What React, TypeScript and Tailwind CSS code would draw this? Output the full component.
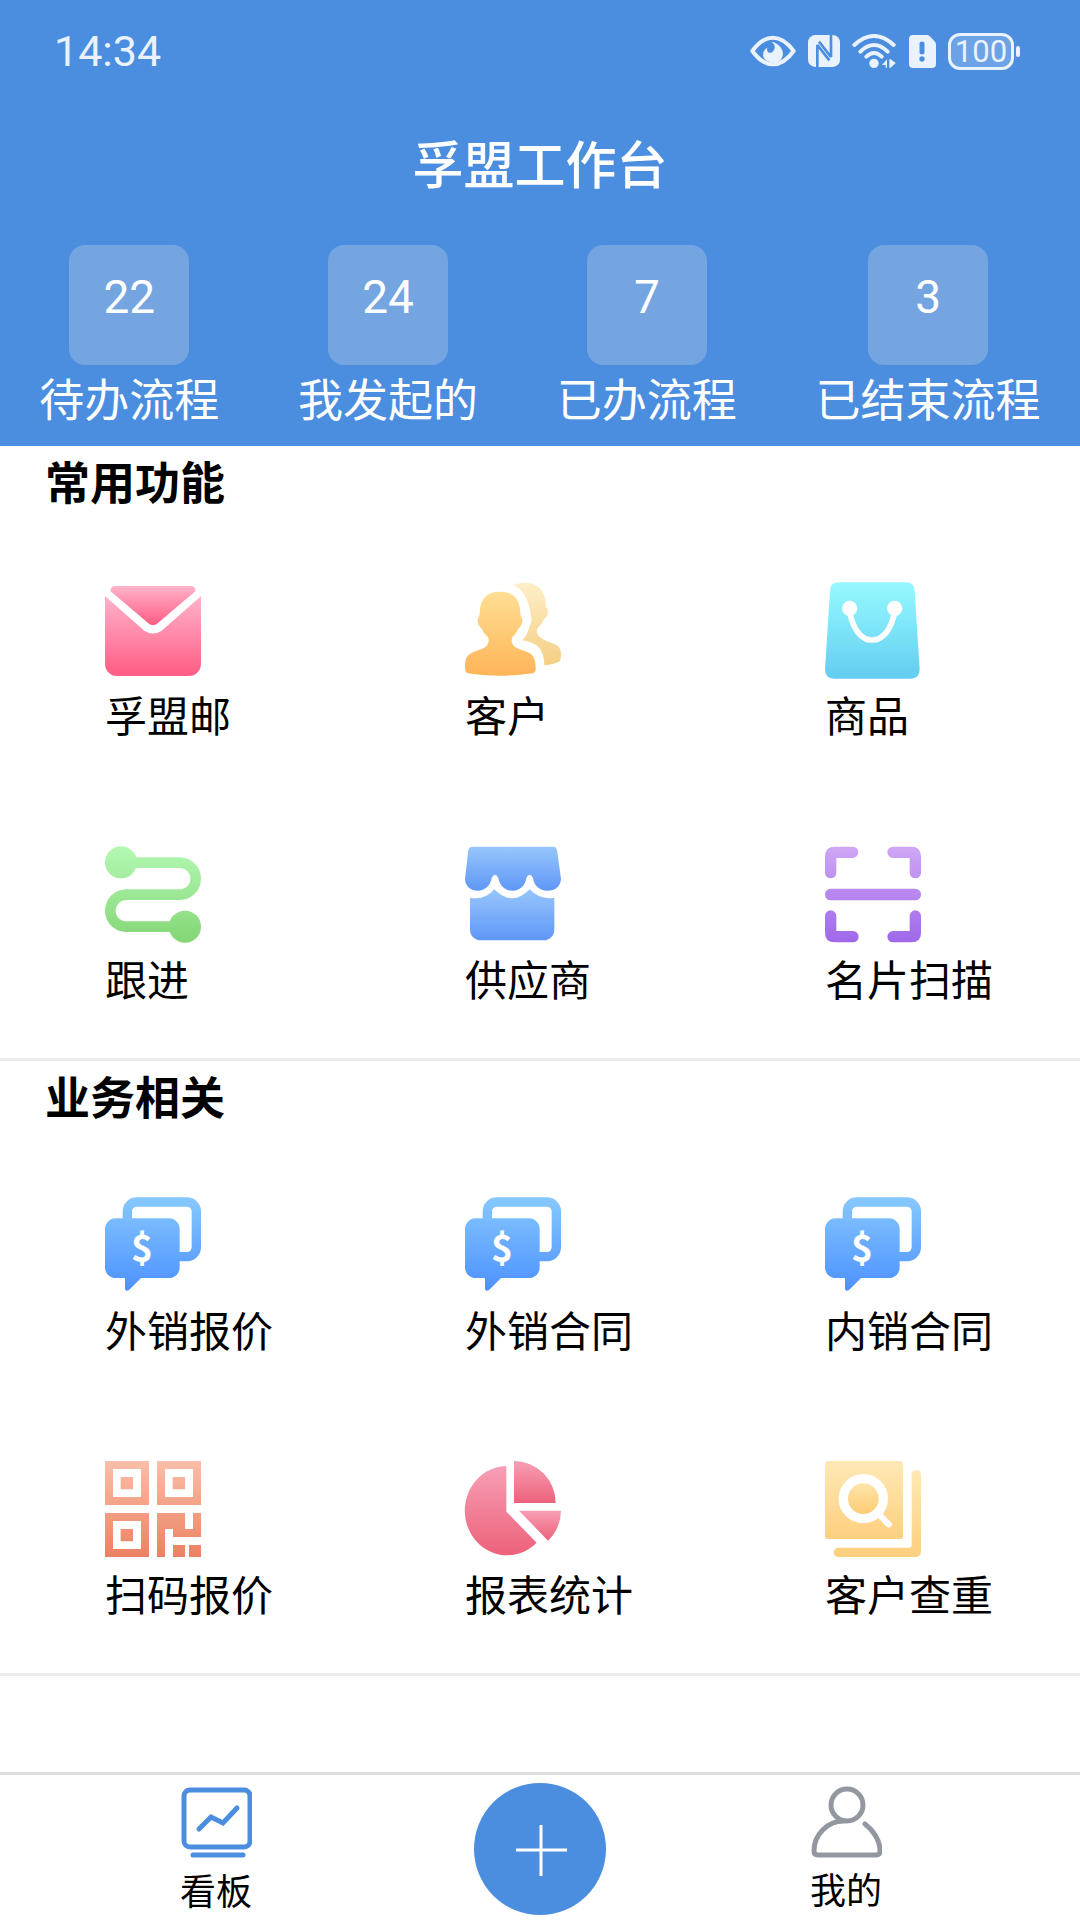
import type { ReactNode } from "react";

const cjk = "font-['Noto_Sans_CJK_SC',sans-serif]";

type GradientProps = { id: string; from: string; to: string; y1?: number; y2?: number };

function Gradient({ id, from, to, y1 = 0, y2 = 288 }: GradientProps) {
  return (
    <linearGradient id={id} gradientUnits="userSpaceOnUse" x1="0" x2="0" y1={y1} y2={y2}>
      <stop offset="0" stopColor={from} />
      <stop offset="1" stopColor={to} />
    </linearGradient>
  );
}

function Tile({ children }: { children: ReactNode }) {
  return (
    <svg viewBox="0 0 288 288" className="size-24 overflow-visible" aria-hidden="true">
      {children}
    </svg>
  );
}

function MailIcon() {
  return (
    <Tile>
      <Gradient id="mailFlap" from="#ffb3ca" to="#ff5c84" y1={12} y2={130} />
      <Gradient id="mailBody" from="#ffb3ca" to="#ff5c84" y1={42} y2={282} />
      <path fill="url(#mailFlap)" d="M28 12H260Q272 14 271 28L158 124Q144 136 130 124L17 28Q16 14 28 12Z" />
      <path
        fill="url(#mailBody)"
        d="M0 42L118 146Q144 163 170 146L288 42V246A36 36 0 0 1 252 282H36A36 36 0 0 1 0 246Z"
      />
    </Tile>
  );
}

function CustomerIcon() {
  return (
    <Tile>
      <Gradient id="customerFront" from="#ffdf94" to="#ffb457" y1={29} y2={281} />
      <Gradient id="customerBack" from="#feeec8" to="#f3cf82" y1={2} y2={250} />
      <path
        fill="url(#customerFront)"
        d="M105 29C145 29 163 50 165 84Q166 98 168 104Q175 112 170 126Q166 136 161 138Q154 155 143 164Q138 172 141 182C146 198 165 201 185 209C205 217 212 228 212 262Q212 272 202 274Q160 281 106 281Q50 281 10 274Q0 272 0 258C0 228 5 218 27 209C47 201 66 198 70 182Q73 172 68 164Q56 155 49 138Q44 136 40 126Q35 112 42 104Q44 98 45 84C47 50 65 29 105 29Z"
      />
      <path
        fill="url(#customerBack)"
        d="M147 9C185 -7 232 3 240 50Q242 64 243 74Q251 80 248 95Q245 106 237 112Q230 128 217 140Q212 148 222 163C238 178 258 180 275 190C288 198 288 212 288 220Q288 230 285 238Q265 248 238 250C238 225 232 205 215 190Q196 178 172 175Q184 165 189 148Q193 135 198 124Q202 110 196 92C192 55 175 25 147 9Z"
      />
    </Tile>
  );
}

function GoodsIcon() {
  return (
    <Tile>
      <Gradient id="goods" from="#97f9fe" to="#63cdf1" />
      <path
        fill="url(#goods)"
        d="M40 1H244Q268 1 269 27L284 262Q284 290 258 290H26Q0 290 0 262L15 27Q16 1 40 1Z"
      />
      <circle cx="74" cy="79" r="23" fill="#fff" />
      <circle cx="209" cy="79" r="23" fill="#fff" />
      <path
        d="M74 91C84 139 107 174 141 174C176 174 199 139 209 91"
        fill="none"
        stroke="#fff"
        strokeWidth="17"
      />
    </Tile>
  );
}

function FollowIcon() {
  return (
    <Tile>
      <Gradient id="follow" from="#b4f9b4" to="#84d675" />
      <path
        d="M48 50H224a48 48 0 0 1 0 96H64a48 48 0 0 0 0 96H240"
        fill="none"
        stroke="url(#follow)"
        strokeWidth="32"
      />
      <circle cx="48" cy="49" r="48" fill="url(#follow)" />
      <circle cx="240" cy="242" r="48" fill="url(#follow)" />
    </Tile>
  );
}

function SupplierIcon() {
  return (
    <Tile>
      <Gradient id="awning" from="#97c6fc" to="#5f97f7" y1={2} y2={134} />
      <Gradient id="shop" from="#97c6fc" to="#5f97f7" y1={130} y2={283} />
      <path
        fill="url(#awning)"
        d="M24 2H264Q274 2 276 12L288 98C288 120 270 134 248 134C222 134 207 118 204 96Q194 76 184 96C181 118 166 134 142 134C120 134 103 118 100 96Q90 76 80 96C77 118 60 134 38 134C15 134 0 118 0 98L10 12Q12 2 24 2Z"
      />
      <path
        fill="url(#shop)"
        d="M15 155Q58 164 88 130Q142 184 194 130Q226 163 268 155V251A32 32 0 0 1 236 283H47A32 32 0 0 1 15 251Z"
      />
    </Tile>
  );
}

function ScanIcon() {
  return (
    <Tile>
      <Gradient id="scan" from="#cfa7f6" to="#a068ea" />
      <g fill="url(#scan)">
        <path d="M0 31Q0 2 29 2H83a17 17 0 0 1 0 34H34V80a17 17 0 0 1-34 0Z" />
        <path d="M288 31Q288 2 259 2H204a17 17 0 0 0 0 34H254V80a17 17 0 0 0 34 0Z" />
        <rect y="128" width="288" height="35" rx="17" />
        <path d="M0 260Q0 289 29 289H84a17 17 0 0 0 0-34H34V210a17 17 0 0 0-34 0Z" />
        <path d="M288 260Q288 289 259 289H204a17 17 0 0 1 0-34H254V210a17 17 0 0 1 34 0Z" />
      </g>
    </Tile>
  );
}

function DealIcon({ id }: { id: string }) {
  return (
    <Tile>
      <Gradient id={id} from="#86c9ff" to="#4e92ff" y2={275} />
      <rect
        x="67"
        y="15"
        width="207"
        height="164"
        rx="28"
        fill="none"
        stroke={`url(#${id})`}
        strokeWidth="28"
      />
      <path
        fill={`url(#${id})`}
        d="M32 64H192A32 32 0 0 1 224 96V211A32 32 0 0 1 192 243H108L72 279Q60 286 60 272V243H32A32 32 0 0 1 0 211V96A32 32 0 0 1 32 64Z"
      />
      <text
        x="111"
        y="194"
        textAnchor="middle"
        fontSize="112"
        className="fill-white font-['Noto_Sans_CJK_SC',sans-serif] font-bold"
      >
        $
      </text>
    </Tile>
  );
}

function QrIcon() {
  return (
    <Tile>
      <Gradient id="qr" from="#f9bfa8" to="#eb8162" />
      <g fill="url(#qr)">
        <path
          fillRule="evenodd"
          d="M0 0H132V132H0ZM24 24V108H108V24ZM156 0H288V132H156ZM180 24V108H264V24ZM0 156H132V288H0ZM24 180V264H108V180Z"
        />
        <path d="M47 48H84V85H47ZM203 48H240V85H203ZM47 204H84V241H47Z" />
        <path d="M156 156H240V204H264V156H288V228H204V204H180V288H156Z" />
        <path d="M204 252H240V288H204ZM252 252H288V288H252Z" />
      </g>
    </Tile>
  );
}

function ReportIcon() {
  return (
    <Tile>
      <Gradient id="pieMain" from="#f79fb5" to="#ec617b" y1={15} y2={283} />
      <Gradient id="pieTop" from="#f79fb5" to="#ec617b" y1={0} y2={126} />
      <Gradient id="pieSide" from="#f79fb5" to="#ec617b" y1={149} y2={239} />
      <path fill="url(#pieMain)" d="M124 15V152L215 245A127 134 0 1 1 124 15Z" />
      <path fill="url(#pieTop)" d="M147 0A125 126 0 0 1 272 126H147Z" />
      <path fill="url(#pieSide)" d="M162 149H288A130 130 0 0 1 249 239Z" />
    </Tile>
  );
}

function DuplicateIcon() {
  return (
    <Tile>
      <Gradient id="sheet" from="#fee9b6" to="#fecf7e" y2={234} />
      <Gradient id="lens" from="#fee5ab" to="#fecb74" y1={66} y2={160} />
      <Gradient id="edge" from="#fee9b6" to="#fecf7e" y1={27} y2={288} />
      <rect width="234" height="234" rx="8" fill="url(#sheet)" />
      <circle cx="115" cy="113" r="60" fill="url(#lens)" stroke="#fff" strokeWidth="28" />
      <path d="M160 158L191 190" stroke="#fff" strokeWidth="19" strokeLinecap="round" />
      <path
        fill="url(#edge)"
        d="M260 41a14 14 0 0 1 28 0V270Q288 288 270 288H40a14 14 0 0 1 0-28H253Q260 260 260 253Z"
      />
    </Tile>
  );
}

function StatusIcons() {
  return (
    <div className="flex items-center text-[#eaf2fd]">
      <svg viewBox="0 0 138 96" className="h-8 w-[46px]" aria-hidden="true">
        <path
          d="M7 48Q36 8 69 8Q102 8 131 48Q102 88 69 88Q36 88 7 48Z"
          fill="none"
          stroke="currentColor"
          strokeWidth="12"
          strokeLinejoin="round"
        />
        <path
          fill="currentColor"
          d="M64 20C78 30 76 42 68 50C60 58 48 52 52 38C36 46 36 66 48 76C58 84 82 84 92 74C106 60 100 28 64 20Z"
        />
      </svg>
      <svg viewBox="0 0 96 96" className="ml-3 size-8" aria-hidden="true">
        <rect width="96" height="96" rx="22" fill="currentColor" />
        <path
          d="M28 96V30L64 76M69 0V66L33 20"
          fill="none"
          stroke="#4b8ee0"
          strokeWidth="8"
          strokeLinejoin="bevel"
        />
      </svg>
      <svg viewBox="0 0 135 102" className="ml-3 h-[34px] w-[45px]" aria-hidden="true">
        <g fill="none" stroke="currentColor" strokeWidth="12" strokeLinecap="round">
          <path d="M7 33Q66 -21 125 33" />
          <path d="M25 53Q66 13 107 53" />
          <path d="M43 68Q66 46 89 68" />
        </g>
        <circle cx="66" cy="88" r="14" fill="currentColor" />
        <path fill="currentColor" d="M90 93L105 76V101H101V93ZM112 76H116L131 87L116 101H112Z" />
      </svg>
      <svg viewBox="0 0 81 99" className="ml-3 h-[33px] w-[27px]" aria-hidden="true">
        <path
          fill="currentColor"
          d="M12 0H55Q60 0 64 5L78 20Q81 24 81 29V87Q81 99 69 99H12Q0 99 0 87V12Q0 0 12 0Z"
        />
        <path d="M39 27V51" stroke="#4b8ee0" strokeWidth="15" strokeLinecap="round" />
        <circle cx="39" cy="72" r="8" fill="#4b8ee0" />
      </svg>
      <div className="ml-3 flex h-[37px] w-[66px] items-center justify-center rounded-xl border-[3px] border-current bg-[#6ca3e6]">
        <span className="font-[Roboto,sans-serif] text-[31px] leading-[31px]">100</span>
      </div>
      <div className="ml-0.5 h-[11px] w-1 rounded-full bg-current" />
    </div>
  );
}

const stats = [
  { value: 22, label: "待办流程" },
  { value: 24, label: "我发起的" },
  { value: 7, label: "已办流程" },
  { value: 3, label: "已结束流程" },
];

const sections = [
  {
    title: "常用功能",
    items: [
      { label: "孚盟邮", icon: <MailIcon /> },
      { label: "客户", icon: <CustomerIcon /> },
      { label: "商品", icon: <GoodsIcon /> },
      { label: "跟进", icon: <FollowIcon /> },
      { label: "供应商", icon: <SupplierIcon /> },
      { label: "名片扫描", icon: <ScanIcon /> },
    ],
  },
  {
    title: "业务相关",
    items: [
      { label: "外销报价", icon: <DealIcon id="dealQuote" /> },
      { label: "外销合同", icon: <DealIcon id="dealExport" /> },
      { label: "内销合同", icon: <DealIcon id="dealDomestic" /> },
      { label: "扫码报价", icon: <QrIcon /> },
      { label: "报表统计", icon: <ReportIcon /> },
      { label: "客户查重", icon: <DuplicateIcon /> },
    ],
  },
];

export default function App() {
  return (
    <div lang="zh-CN" className={`flex min-h-screen flex-col bg-white text-black ${cjk}`}>
      <header className="bg-[#4b8ee0] pb-4 text-white">
        <div className="flex h-[102px] items-center justify-between pr-[60px] pl-[54px]">
          <time className="font-[Roboto,sans-serif] text-[43px] leading-none text-[#eaf2fd]">14:34</time>
          <StatusIcons />
        </div>
        <h1 className="text-center text-[51px] leading-[120px] font-medium">孚盟工作台</h1>
        <div className="flex justify-around pt-[23px]">
          {stats.map((s) => (
            <button key={s.label} type="button" className="flex flex-col items-center">
              <span className="size-[120px] rounded-2xl bg-[#74a5e1] text-center font-[Roboto,sans-serif] text-[46px] leading-[104px]">
                {s.value}
              </span>
              <span className="text-[45px] leading-[65px]">{s.label}</span>
            </button>
          ))}
        </div>
      </header>

      <main className="flex-1">
        {sections.map((section) => (
          <section key={section.title} className="border-b-[3px] border-[#ebebeb]">
            <h2 className="pl-[45px] text-[45px] leading-[69px] font-bold">{section.title}</h2>
            <div className="grid grid-cols-3 gap-y-24 pt-[67px] pb-11">
              {section.items.map((item) => (
                <button key={item.label} type="button" className="flex flex-col items-start pl-[105px]">
                  {item.icon}
                  <span className="text-[42px] leading-[72px] whitespace-nowrap">{item.label}</span>
                </button>
              ))}
            </div>
          </section>
        ))}
      </main>

      <nav className="flex h-[148px] items-start border-t-[3px] border-[#dedede]">
        <a href="#board" className="flex w-2/5 flex-col items-center pt-[11px]">
          <svg viewBox="0 0 72 72" className="size-[72px]" fill="none" stroke="#4b8ee0" aria-hidden="true">
            <rect x="4" y="4" width="66" height="57" rx="6" strokeWidth="5" />
            <path d="M13 69H63M19 43L31 31L43 37L57 22" strokeWidth="5" strokeLinecap="round" />
          </svg>
          <span className="text-4xl leading-[62px]">看板</span>
        </a>
        <div className="flex w-1/5 justify-center pt-2">
          <button
            type="button"
            aria-label="新建"
            className="flex size-[132px] items-center justify-center rounded-full bg-[#4b8ee0]"
          >
            <svg viewBox="0 0 54 54" className="size-[54px]" stroke="#fff" strokeWidth="3" aria-hidden="true">
              <path d="M28 3V54M3 28H54" />
            </svg>
          </button>
        </div>
        <a href="#mine" className="flex w-2/5 flex-col items-center pt-[11px] pr-9">
          <svg
            viewBox="0 0 72 72"
            className="size-[72px]"
            fill="none"
            stroke="#93979f"
            strokeWidth="5"
            strokeLinecap="round"
            aria-hidden="true"
          >
            <circle cx="37" cy="19" r="16" />
            <path d="M34 35C17 35 4 49 4 65Q4 69 8 69H66Q70 69 70 65C70 54 63 44 55 38" />
          </svg>
          <span className="text-4xl leading-[60px]">我的</span>
        </a>
      </nav>
    </div>
  );
}
